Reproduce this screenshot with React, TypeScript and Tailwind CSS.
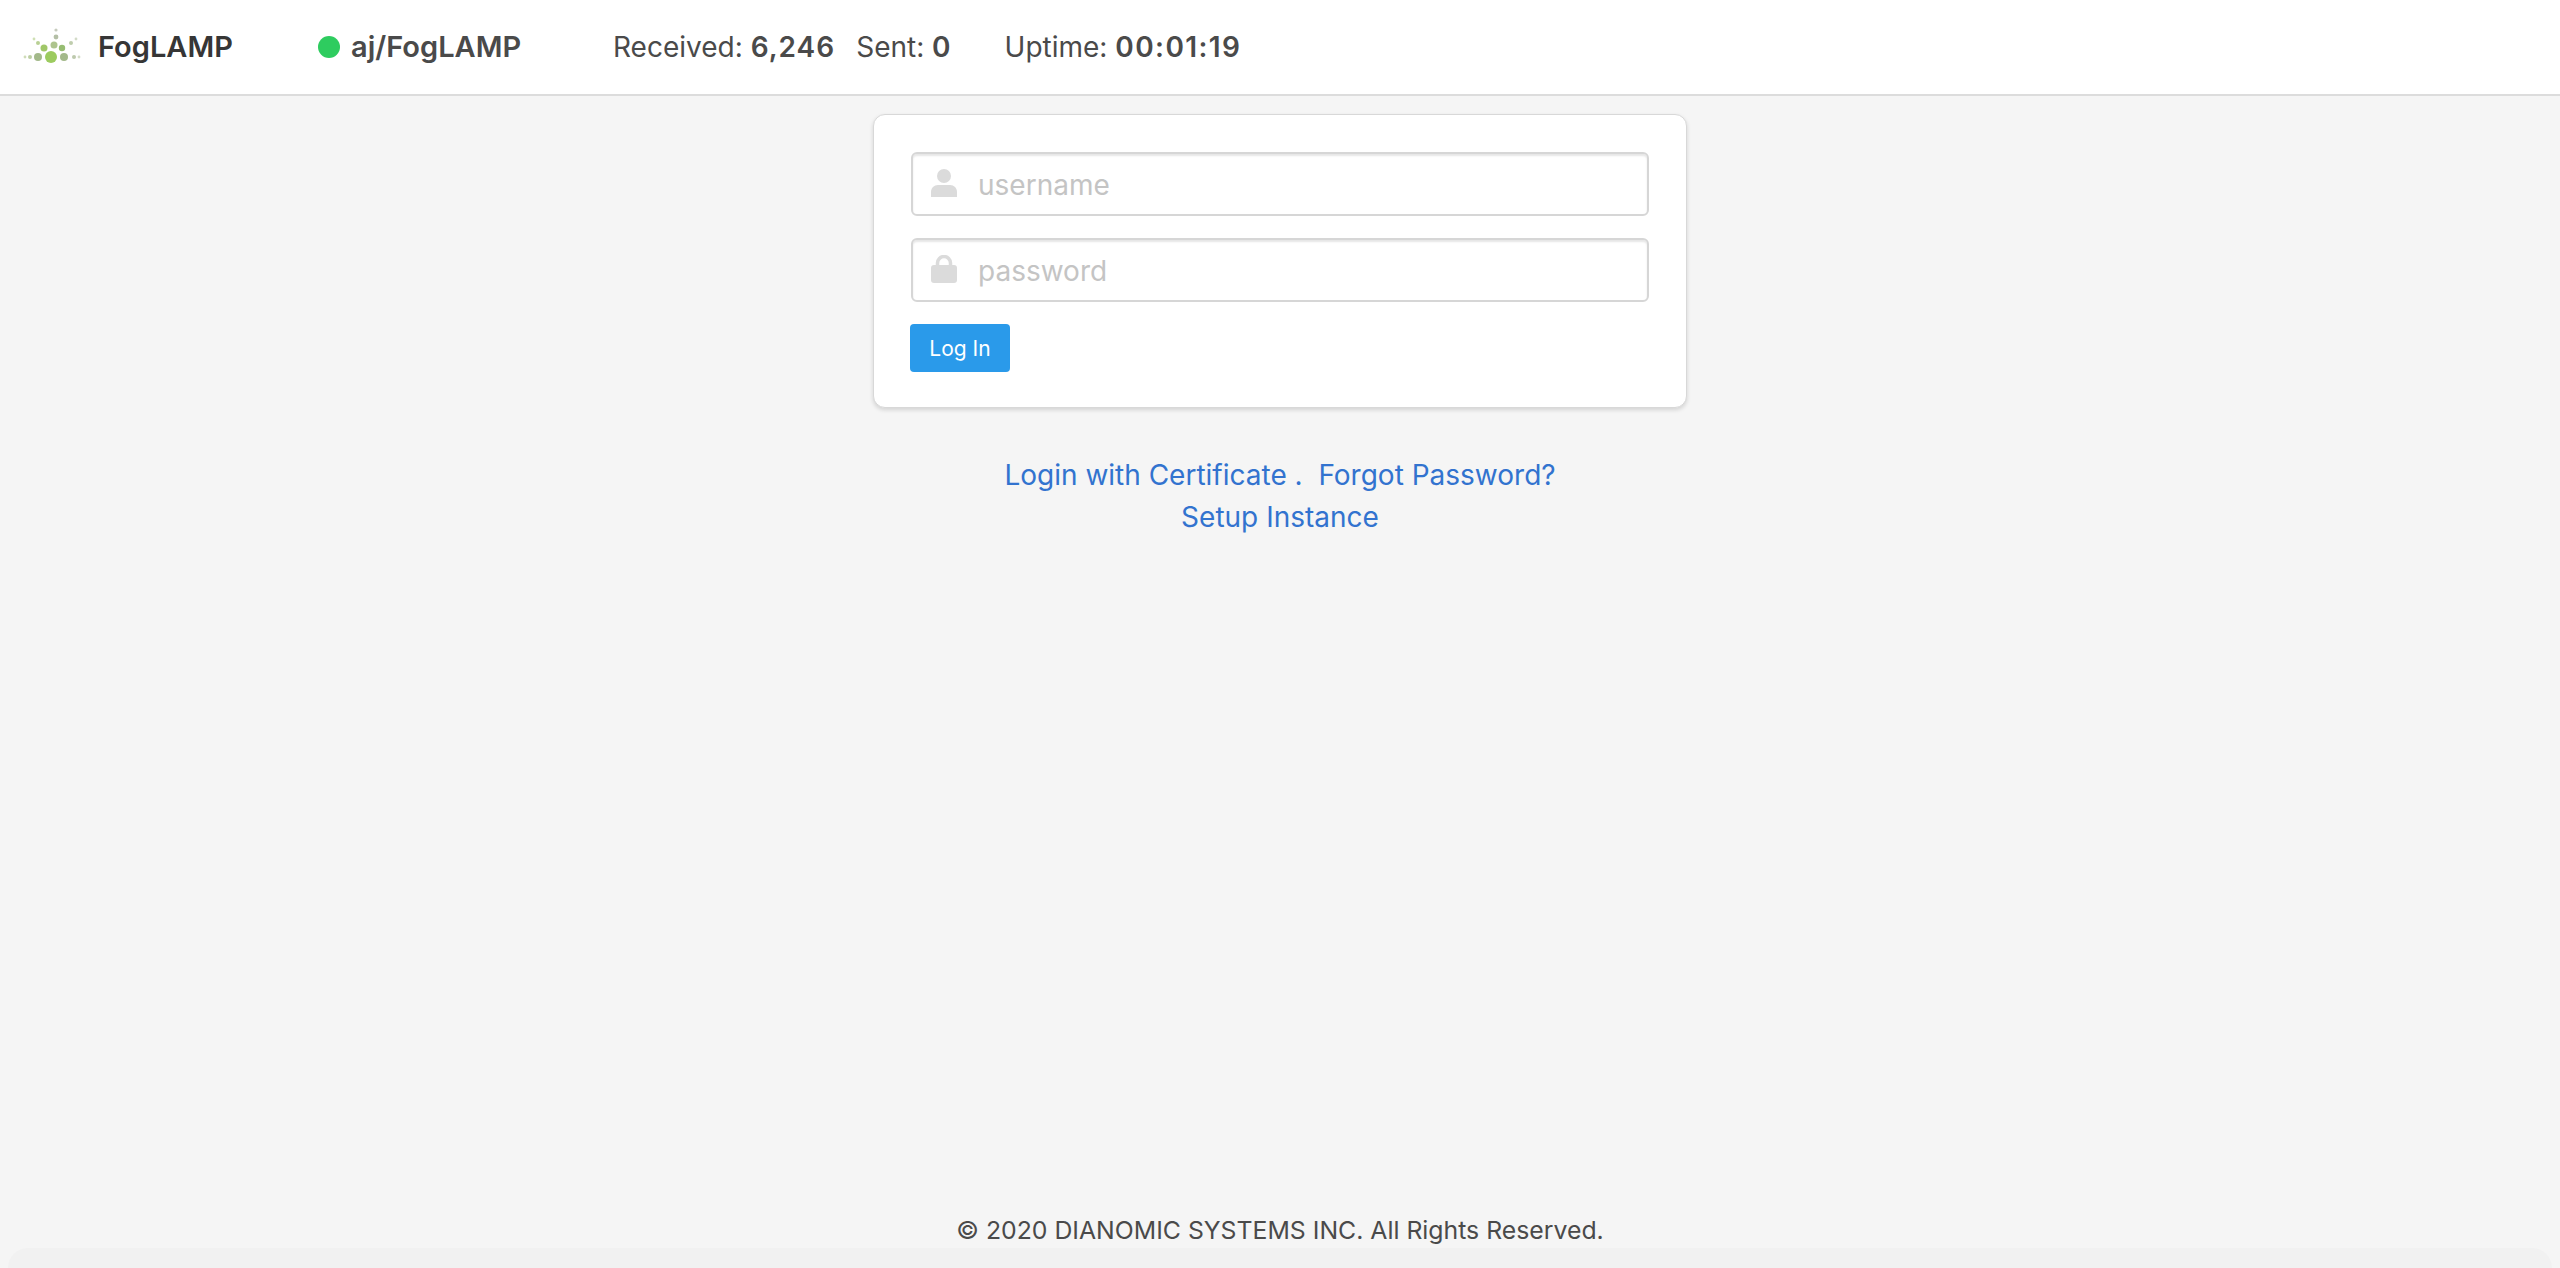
import React from "react";

function Logo() {
  const dots: [number, number, number, string][] = [
    [51, 57, 6, "#9ccb5f"], [38, 57, 4, "#a3b98a"], [64, 57, 4, "#a3b98a"], [44, 48, 3.5, "#a0c768"], [62, 48, 3.2, "#97bd72"],
    [54, 45, 3.5, "#aec48e"], [56, 37, 2.4, "#b4bfa6"], [56, 30, 1.6, "#c6cbbd"], [38, 43, 2, "#b9d094"], [34, 39, 1.4, "#cfe0b4"],
    [71, 43, 2, "#bfcdad"], [76, 39, 1.4, "#d3dbc8"], [30, 57, 2, "#bdcfa4"], [25, 57, 1.4, "#cfdcb8"], [74, 57, 2, "#bdc9ad"], [79, 57, 1.4, "#d3dcc6"],
  ];
  return (
    <svg width="62" height="40" viewBox="20 27 62 40" className="shrink-0 blur-[0.5px]">
      {dots.map(([cx, cy, r, f], i) => <circle key={i} cx={cx} cy={cy} r={r} fill={f} />)}
    </svg>
  );
}

function UserIcon() {
  return (
    <svg width="26" height="28" viewBox="0 0 26 28" fill="#dbdbdb">
      <circle cx="13" cy="7" r="7" />
      <path d="M0 28v-5c0-4 3-7 7-7h12c4 0 7 3 7 7v5z" />
    </svg>
  );
}

function LockIcon() {
  return (
    <svg width="26" height="28" viewBox="0 0 26 28" fill="none">
      <path d="M6.5 12V8a6.5 6.5 0 0 1 13 0v4" stroke="#dbdbdb" strokeWidth="3.5" />
      <rect x="0" y="10" width="26" height="18" rx="3" fill="#dbdbdb" />
    </svg>
  );
}

function Field({ icon, placeholder }: { icon: React.ReactNode; placeholder: string }) {
  return (
    <div className="relative h-[64px] w-[738px]">
      <span className="absolute left-[20px] top-[17px] flex">{icon}</span>
      <input
        placeholder={placeholder}
        className="h-full w-full rounded-[6px] border-2 border-[#d6d6d6] bg-white pl-[65px] pt-[1px] text-[28px] shadow-[inset_0_2px_2px_rgba(10,10,10,0.1)] outline-none placeholder:text-[#c4c4c4]"
      />
    </div>
  );
}

export default function App() {
  return (
    <div className="flex h-[1268px] flex-col bg-[#f5f5f5] font-['Inter','Liberation_Sans',sans-serif] text-[#4a4a4a]">
      <header className="flex h-[96px] shrink-0 items-center border-b-2 border-[#dcdcdc] bg-white">
        <div className="ml-[20px] flex w-[298px] items-center gap-[16px]">
          <Logo />
          <span className="text-[29px] font-semibold text-[#363636]">FogLAMP</span>
        </div>
        <div className="flex w-[295px] items-center gap-[11px]">
          <span className="h-[22px] w-[22px] rounded-full bg-[#2ecc5f]" />
          <span className="text-[29px] font-semibold">aj/FogLAMP</span>
        </div>
        <div className="flex items-center text-[28px]">
          <span>Received: <b className="font-semibold tracking-[1px]">6,246</b></span>
          <span className="ml-[21px]">Sent: <b className="font-semibold tracking-[1px]">0</b></span>
          <span className="ml-[53px]">Uptime: <b className="font-semibold tracking-[1.4px]">00:01:19</b></span>
        </div>
      </header>

      <main className="flex flex-1 flex-col items-center pt-[18px]">
        <div className="flex h-[294px] w-[814px] flex-col rounded-[12px] border border-[#d8d8d8] bg-white px-[37px] pt-[37px] shadow-[0_2px_4px_rgba(10,10,10,0.14)]">
          <Field icon={<UserIcon />} placeholder="username" />
          <div className="mt-[22px]">
            <Field icon={<LockIcon />} placeholder="password" />
          </div>
          <button className="-ml-px mt-[22px] h-[48px] w-[100px] rounded-[4px] bg-[#2a9aea] pt-[2px] text-[21px] text-white">Log In</button>
        </div>
        <div className="mt-[46px] text-center text-[28px] leading-[42px] text-[#3273cf]">
          <div>Login with Certificate .&nbsp; Forgot Password?</div>
          <div>Setup Instance</div>
        </div>
      </main>

      <footer className="flex h-[53px] shrink-0 flex-col">
        <div className="pt-[1px] text-center text-[24.8px] leading-[29px] text-[#4a4a4a]">© 2020 DIANOMIC SYSTEMS INC. All Rights Reserved.</div>
        <div className="mx-auto mt-[3px] h-[20px] w-[2544px] rounded-t-[40px] bg-[#f1f1f1]" />
      </footer>
    </div>
  );
}
